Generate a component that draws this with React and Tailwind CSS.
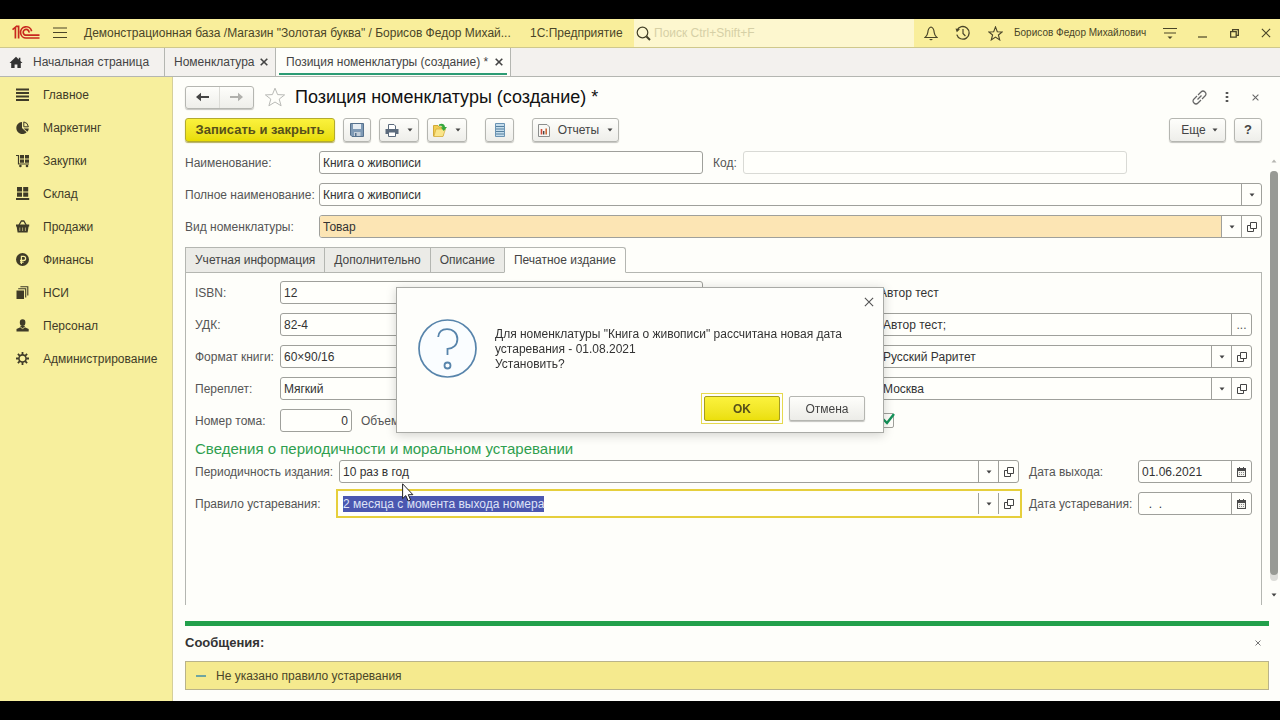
import React, { useEffect, useRef, useState } from 'react';

const Svg = ({ w = 16, h = w, box = `0 0 ${w} ${h}`, className = '', children }) => (
  <svg width={w} height={h} viewBox={box} fill="none" className={`shrink-0 ${className}`} aria-hidden="true">
    {children}
  </svg>
);

const Logo = () => (
  <Svg w={28} h={16}>
    <g stroke="#c8281e" strokeWidth="1.7">
      <path d="M0.5 4.6 L3.4 2.2 V13.6" />
      <path d="M4 1.3 H6.6 V13.6" />
      <path d="M19.6 6.2 A5.6 5.6 0 1 0 14.4 13 H27.5" />
      <path d="M17 7.6 A2.9 2.9 0 1 0 14.4 10.2 H27.5" />
    </g>
  </Svg>
);

const HomeIcon = () => (
  <Svg w={14} h={13}>
    <path d="M7 0.8 L0.5 7 H2.2 V12 H5.6 V8.4 H8.4 V12 H11.8 V7 H13.5 L11.4 5 V1.8 H9.8 V3.5 Z" fill="#333" />
  </Svg>
);

const OpenIcon = () => (
  <Svg w={10} h={10} className="text-[#444]">
    <path d="M3.5 0.5 H9.5 V6.5 H3.5 Z M3.5 3.5 H0.5 V9.5 H6.5 V6.5" stroke="currentColor" />
  </Svg>
);

const CalendarIcon = () => (
  <Svg w={9} h={10}>
    <path d="M0 1 H9 V10 H0 Z M2 0 H3 V1 H2 Z M6 0 H7 V1 H6 Z" fill="#4a4a4a" />
    <path d="M1 4 H8 V9 H1 Z" fill="#f4f4ee" />
    <path d="M2 5.5 H7 M2 7.5 H7" stroke="#888" strokeDasharray="1 1" />
  </Svg>
);

const Caret = () => (
  <Svg w={6} h={4}>
    <path d="M0.5 0.5 H5.5 L3 3.5 Z" fill="#444" />
  </Svg>
);

const Cross = ({ size = 8, width = 1.2 }) => (
  <Svg w={size} box="0 0 8 8">
    <path d="M0.7 0.7 L7.3 7.3 M7.3 0.7 L0.7 7.3" stroke="currentColor" strokeWidth={width} />
  </Svg>
);

const menu = [
  {
    title: 'Главное',
    icon: <path d="M0 1.5 H13 M0 5 H13 M0 8.5 H13 M0 12 H13" stroke="#3f3b28" strokeWidth="1.8" />,
  },
  {
    title: 'Маркетинг',
    icon: (
      <>
        <path d="M6 1 A6 6 0 1 0 10.6 11.2 L6 7 Z" fill="#3f3b28" />
        <path d="M7.8 0.9 A5.6 5.6 0 0 1 12.4 5.8 H7.8 Z" stroke="#3f3b28" />
        <path d="M7.6 7.4 H12.8 A6 6 0 0 1 11.4 10.8 Z" fill="#3f3b28" />
      </>
    ),
  },
  {
    title: 'Закупки',
    icon: (
      <>
        <path d="M0 1.5 H2.5 V10 H13" stroke="#3f3b28" strokeWidth="1.2" />
        <path d="M4 1 H8 V4.4 H4 Z M9 1 H13 V4.4 H9 Z M4 5.4 H8 V8.8 H4 Z M9 5.4 H13 V8.8 H9 Z" fill="#3f3b28" />
        <circle cx="4.4" cy="12" r="1.3" fill="#3f3b28" />
        <circle cx="11" cy="12" r="1.3" fill="#3f3b28" />
      </>
    ),
  },
  {
    title: 'Склад',
    icon: <path d="M1 0 H6 V4.4 H1 Z M7.2 0 H12.2 V4.4 H7.2 Z M1 5.5 H6 V9.8 H1 Z M7.2 5.5 H12.2 V9.8 H7.2 Z M0 11 H13.2 V13 H0 Z" fill="#3f3b28" />,
  },
  {
    title: 'Продажи',
    icon: (
      <>
        <path d="M3 5 L5.4 1 H7.8 L10.2 5" stroke="#3f3b28" strokeWidth="1.3" />
        <path d="M0 4.5 H13.2 V6.5 H12.6 L11.6 12.5 H1.6 L0.6 6.5 H0 Z" fill="#3f3b28" />
        <path d="M3.8 7.5 V11 M6.6 7.5 V11 M9.4 7.5 V11" stroke="#c9c283" strokeWidth="0.8" />
      </>
    ),
  },
  {
    title: 'Финансы',
    icon: (
      <>
        <circle cx="6.5" cy="6.5" r="6.5" fill="#3f3b28" />
        <path d="M5.4 11 V3.4 H7.6 A2 2 0 0 1 7.6 7.4 H4 M4 9.2 H7.6" stroke="#f6ee9c" strokeWidth="1.2" />
      </>
    ),
  },
  {
    title: 'НСИ',
    icon: (
      <>
        <path d="M0.5 4.5 H8 V13 H0.5 Z" fill="#3f3b28" />
        <path d="M2.2 2.7 H9.7 V11.4 M4.4 0.7 H11.8 V9.6" stroke="#3f3b28" strokeWidth="1.1" />
      </>
    ),
  },
  {
    title: 'Персонал',
    icon: (
      <>
        <path d="M3.8 3.4 A2.8 3.2 0 0 1 9.4 3.4 A2.8 3.6 0 0 1 3.8 3.4 Z" fill="#3f3b28" />
        <path d="M0.5 12.5 V10 L4.4 8.2 V7 H8.8 V8.2 L12.7 10 V12.5 Z" fill="#3f3b28" />
        <path d="M4.4 8.2 L6.6 9.6 L8.8 8.2" stroke="#f6ee9c" strokeWidth="0.8" />
      </>
    ),
  },
  {
    title: 'Администрирование',
    icon: (
      <>
        <circle cx="6.5" cy="6.5" r="3.6" stroke="#3f3b28" strokeWidth="1.6" />
        <path
          d="M6.5 0 V2.6 M6.5 10.4 V13 M0 6.5 H2.6 M10.4 6.5 H13 M1.9 1.9 L3.8 3.8 M9.2 9.2 L11.1 11.1 M11.1 1.9 L9.2 3.8 M3.8 9.2 L1.9 11.1"
          stroke="#3f3b28"
          strokeWidth="1.8"
        />
      </>
    ),
  },
];

const formTabs = ['Учетная информация', 'Дополнительно', 'Описание', 'Печатное издание'];

const buttonIcons = {
  list: ['Выбрать из списка', <Caret />],
  open: ['Открыть', <OpenIcon />],
  more: ['Выбрать', '...'],
  date: ['Календарь', <CalendarIcon />],
};

// Поле ввода с кнопками справа
const Field = ({ id, value, buttons = [], boxClass = '', inputClass = '', muted, active, inputRef, label }) => (
  <div
    className={`flex h-[23px] min-w-0 border bg-[#fffffb] ${
      active
        ? 'border-transparent outline-2 outline-offset-1 outline-[#e6cf3c]'
        : `rounded-[3px] ${muted ? 'border-[#d9dad5]' : 'border-[#9fa09b]'}`
    } ${boxClass}`}
  >
    <input
      id={id}
      ref={inputRef}
      aria-label={label}
      defaultValue={value}
      className={`min-w-0 flex-1 rounded-l-[2px] px-[3px] text-[12px] leading-4 text-[#333] outline-none selection:bg-[#4b57b0] selection:text-[#dfe3f7] ${inputClass}`}
    />
    {buttons.map((b) => (
      <button
        key={b}
        type="button"
        aria-label={buttonIcons[b][0]}
        className="flex w-5 shrink-0 items-center justify-center border-l border-[#9fa09b] text-[#555]"
      >
        {buttonIcons[b][1]}
      </button>
    ))}
  </div>
);

const Label = ({ htmlFor, className = '', children }) => (
  <label htmlFor={htmlFor} className={`shrink-0 whitespace-nowrap text-[#555] ${className}`}>
    {children}
  </label>
);

const ToolButton = ({ label, className = '', children }) => (
  <button
    type="button"
    aria-label={label}
    className={`flex h-6 shrink-0 items-center justify-center rounded-[3px] border border-[#b5b6b1] bg-linear-to-b from-[#fefefb] to-[#eeeeea] text-[#444] shadow-[0_1px_1px_#c4c4bf] ${className}`}
  >
    {children}
  </button>
);

const IconButton = ({ label, className = '', children }) => (
  <button type="button" aria-label={label} className={`flex shrink-0 items-center justify-center ${className}`}>
    {children}
  </button>
);

const Header = () => (
  <header className="flex h-[29px] items-center border-b border-[#cfc88c] bg-[#f9ee9b] pr-[6px] pl-3 text-[#4a4528]">
    <Logo />
    <IconButton label="Меню" className="ml-3 w-4">
      <Svg w={14} h={12}>
        <path d="M0 1 H14 M0 5.5 H14 M0 10.5 H14" stroke="#4a4528" strokeWidth="1.2" />
      </Svg>
    </IconButton>
    <div className="ml-4 w-[436px] whitespace-nowrap">
      Демонстрационная база /Магазин "Золотая буква" / Борисов Федор Михай...
    </div>
    <div className="ml-[10px] w-[92px] whitespace-nowrap">1С:Предприятие</div>
    <label className="ml-3 flex h-full min-w-0 flex-1 items-center gap-[3px] bg-[#fdf7cf] pl-[2px]">
      <Svg w={15}>
        <circle cx="6.5" cy="6.5" r="5.3" stroke="#444028" strokeWidth="1.2" />
        <path d="M10.5 10.5 L14 14" stroke="#444028" strokeWidth="2" />
      </Svg>
      <input
        type="search"
        aria-label="Поиск"
        placeholder="Поиск Ctrl+Shift+F"
        className="min-w-0 flex-1 outline-none placeholder:text-[#d6d0a6]"
      />
    </label>
    <IconButton label="Уведомления" className="ml-[9px] w-4">
      <Svg w={14} h={15}>
        <path d="M7 1 C4.4 1.6 4 4 3.8 6.5 C3.6 9 2.4 10 1 11.5 H13 C11.6 10 10.4 9 10.2 6.5 C10 4 9.6 1.6 7 1 Z" stroke="#4a4528" strokeWidth="1.2" />
        <path d="M5 13 H9 L7 14.6 Z" fill="#4a4528" />
      </Svg>
    </IconButton>
    <IconButton label="История" className="ml-4 w-4">
      <Svg w={16}>
        <path d="M2 5.5 A6.3 6.3 0 1 1 1.8 9.6" stroke="#4a4528" strokeWidth="1.3" />
        <path d="M0.5 3.5 L5 4.2 L1.8 7.2 Z" fill="#4a4528" />
        <path d="M8 4 V8.4 L10.4 11" stroke="#4a4528" strokeWidth="1.2" />
      </Svg>
    </IconButton>
    <IconButton label="Избранное" className="ml-4 w-4">
      <Svg w={15}>
        <path d="M7.5 0.9 L9.3 5.7 L14.2 5.9 L10.4 9 L11.7 13.9 L7.5 11.1 L3.3 13.9 L4.6 9 L0.8 5.9 L5.7 5.7 Z" stroke="#4a4528" strokeWidth="1.1" />
      </Svg>
    </IconButton>
    <div className="ml-[11px] w-[137px] text-[10px] whitespace-nowrap">Борисов Федор Михайлович</div>
    <IconButton label="Настройки" className="ml-[11px] w-4">
      <Svg w={14} h={13}>
        <path d="M0 1.5 H14 M1 6 H13" stroke="#4a4528" strokeWidth="1.2" />
        <path d="M4.5 9.5 H9.5 L7 12 Z" fill="#4a4528" />
      </Svg>
    </IconButton>
    <IconButton label="Свернуть" className="ml-4 w-4">
      <Svg w={9} h={10}>
        <path d="M0 9 H9" stroke="#4a4528" strokeWidth="1.2" />
      </Svg>
    </IconButton>
    <IconButton label="Восстановить" className="ml-4 w-4">
      <Svg w={9}>
        <path d="M0.6 2.6 H6.2 V8.2 H0.6 Z M2.6 2.6 V0.6 H8.4 V6.4 H6.2" stroke="#4a4528" strokeWidth="1.3" />
      </Svg>
    </IconButton>
    <IconButton label="Закрыть" className="ml-4 w-4">
      <Cross size={10} width={0.9} />
    </IconButton>
  </header>
);

const OpenTabs = () => (
  <div className="flex h-[29px] border-b border-[#b4b6b1] bg-[#f3f1ee] whitespace-nowrap text-[#444]">
    <a href="#home" className="flex w-[165px] items-center gap-[10px] border-r border-[#b4b6b1] pl-[9px]">
      <HomeIcon />
      Начальная страница
    </a>
    <div className="flex w-[111px] items-center justify-between border-r border-[#b4b6b1] pr-[7px] pl-[9px]">
      <a href="#list">Номенклатура</a>
      <IconButton label="Закрыть вкладку">
        <Cross width={1.6} />
      </IconButton>
    </div>
    <div className="flex w-[235px] border-r border-[#b4b6b1] bg-[#fefefa] px-[3px] pb-px">
      <div className="flex flex-1 items-center justify-between border-b-2 border-[#2c9c74] pt-[3px] pr-1 pl-[7px]">
        <a href="#item">Позиция номенклатуры (создание) *</a>
        <IconButton label="Закрыть вкладку">
          <Cross width={1.6} />
        </IconButton>
      </div>
    </div>
  </div>
);

const Sidebar = () => (
  <nav className="w-[173px] shrink-0 border-r border-[#d5cf9a] bg-[#f7ef9d] pt-px">
    {menu.map((item) => (
      <a key={item.title} href="#" className="flex h-[33px] items-center gap-[13px] pl-4 text-[#3f3b28]">
        <Svg w={14}>{item.icon}</Svg>
        {item.title}
      </a>
    ))}
  </nav>
);

const TitleRow = () => (
  <div className="flex h-[22px] items-center pr-[6px]">
    <div className="flex h-[23px] w-[69px] rounded-[3px] border border-[#b5b6b1] bg-linear-to-b from-[#fefefb] to-[#eeeeea] shadow-[0_1px_1px_#c4c4bf]">
      <IconButton label="Назад" className="flex-1 border-r border-[#dcdcd7]">
        <Svg w={13} h={10}>
          <path d="M0 5 L5 0.8 V9.2 Z M4 4 H13 V6 H4 Z" fill="#444" />
        </Svg>
      </IconButton>
      <IconButton label="Вперед" className="flex-1">
        <Svg w={13} h={10}>
          <path d="M13 5 L8 0.8 V9.2 Z M9 4 H0 V6 H9 Z" fill="#b0b0ac" />
        </Svg>
      </IconButton>
    </div>
    <IconButton label="В избранное" className="ml-[10px]">
      <Svg w={22} h={20}>
        <path d="M11 1.2 L13.6 7.6 L20.6 7.9 L15.2 12.1 L17.1 18.8 L11 15 L4.9 18.8 L6.8 12.1 L1.4 7.9 L8.4 7.6 Z" stroke="#b9bab6" />
      </Svg>
    </IconButton>
    <h1 className="ml-[9px] flex-1 text-[18px] whitespace-nowrap text-[#111]">Позиция номенклатуры (создание) *</h1>
    <IconButton label="Ссылка" className="w-4">
      <Svg w={15}>
        <g stroke="#666" strokeWidth="1.2">
          <path d="M6 5 L9 2 A2.8 2.8 0 0 1 13 6 L10 9" />
          <path d="M9 10 L6 13 A2.8 2.8 0 0 1 2 9 L5 6" />
          <path d="M5.5 9.5 L9.5 5.5" />
        </g>
      </Svg>
    </IconButton>
    <IconButton label="Действия" className="ml-3 w-4">
      <Svg w={4} h={12}>
        <path d="M0.7 1 H3.3 V3 H0.7 Z M0.7 5 H3.3 V7 H0.7 Z M0.7 9 H3.3 V11 H0.7 Z" fill="#555" />
      </Svg>
    </IconButton>
    <IconButton label="Закрыть форму" className="ml-3 w-4 text-[#666]">
      <Cross size={7} />
    </IconButton>
  </div>
);

const Commands = () => (
  <div className="mt-[10px] flex h-6 items-center">
    <button
      type="button"
      className="h-6 w-[150px] rounded-[3px] border border-[#b3ab2e] bg-linear-to-b from-[#fbf23c] to-[#e8dc00] text-[13px] font-bold whitespace-nowrap text-[#56501a] shadow-[0_1px_1px_#b5ae60]"
    >
      Записать и закрыть
    </button>
    <ToolButton label="Записать" className="ml-2 w-7">
      <Svg w={14}>
        <path d="M0.5 0.5 H13.5 V13.5 H2 L0.5 12 Z" fill="#7f9ab5" stroke="#56718d" />
        <path d="M3 1 H11 V6 H3 Z" fill="#e6edf3" />
        <path d="M4 9 H10.5 V13 H4 Z" fill="#c3ced9" />
        <path d="M5 10 H6.5 V13 H5 Z" fill="#56718d" />
      </Svg>
    </ToolButton>
    <ToolButton label="Печать" className="ml-2 w-10 gap-2">
      <Svg w={14} h={13}>
        <path d="M3.5 5 V0.5 H9 L10.5 2 V5" fill="#fff" stroke="#5b6a7c" />
        <path d="M0.5 5 H13.5 V10 H0.5 Z" fill="#5b6a7c" />
        <path d="M3.5 8 H10.5 V12.5 H3.5 Z" fill="#fff" stroke="#5b6a7c" />
      </Svg>
      <Caret />
    </ToolButton>
    <ToolButton label="Создать на основании" className="ml-2 w-10 gap-2">
      <Svg w={14}>
        <path d="M0.5 2.5 H5 L6 4 H10 V13 H0.5 Z" fill="#f2cf52" stroke="#d2a93a" />
        <path d="M3 6 H12.5 L10 13.5 H0.8 Z" fill="#fae58a" stroke="#d2a93a" strokeWidth="0.7" />
        <path d="M6 1.5 C9 0 11.6 1.2 12 4 H14 L10.8 8 L7.8 4.6 H9.6 C9.3 3 8 2.6 6 3 Z" fill="#35a83e" />
      </Svg>
      <Caret />
    </ToolButton>
    <ToolButton label="Список" className="ml-[18px] w-[29px]">
      <Svg w={10} h={14}>
        <path d="M0.5 0.5 H9.5 V13.5 H0.5 Z" fill="#c4dcec" stroke="#6a93b3" />
        <path d="M1 3.5 H9 M1 6 H9 M1 8.5 H9 M1 11 H9" stroke="#55809f" />
      </Svg>
    </ToolButton>
    <ToolButton className="ml-[18px] w-[87px] gap-2">
      <Svg w={12} h={13}>
        <path d="M0.5 0.5 H9 L11.5 3 V12.5 H0.5 Z" fill="#f8f8f5" stroke="#8b8d8c" />
        <path d="M3.5 5 V10.5" stroke="#cf4a3a" strokeWidth="1.6" />
        <path d="M5.7 7 V10.5" stroke="#444" strokeWidth="1.4" />
        <path d="M8.2 4.5 V10.5" stroke="#cf6a3a" strokeWidth="1.6" />
      </Svg>
      Отчеты
      <Caret />
    </ToolButton>
    <ToolButton className="ml-auto w-[57px] gap-[6px] pl-1">
      Еще
      <Caret />
    </ToolButton>
    <ToolButton className="mr-[7px] ml-2 w-7 text-[13px] font-bold">?</ToolButton>
  </div>
);

const PrintEdition = ({ ruleRef }) => (
  <div className="flex-1 border border-b-0 border-[#b4b6b1] px-[9px] pt-2">
    <div className="grid grid-cols-[508px_1fr] gap-x-[10px] gap-y-[9px]">
      <div className="flex items-center">
        <Label htmlFor="isbn" className="w-[85px]">ISBN:</Label>
        <Field id="isbn" value="12" boxClass="flex-1" />
      </div>
      <div className="flex items-center pl-[166px] text-[#333]">Автор тест</div>

      <div className="flex items-center">
        <Label htmlFor="udk" className="w-[85px]">УДК:</Label>
        <Field id="udk" value="82-4" boxClass="flex-1" />
      </div>
      <div className="flex items-center pl-[166px]">
        <Field id="authors" label="Авторы" value="Автор тест;" buttons={['more']} boxClass="flex-1" />
      </div>

      <div className="flex items-center">
        <Label htmlFor="format" className="w-[85px]">Формат книги:</Label>
        <Field id="format" value="60×90/16" boxClass="flex-1" />
      </div>
      <div className="flex items-center pl-[166px]">
        <Field id="publisher" label="Издательство" value="Русский Раритет" buttons={['list', 'open']} boxClass="flex-1" />
      </div>

      <div className="flex items-center">
        <Label htmlFor="cover" className="w-[85px]">Переплет:</Label>
        <Field id="cover" value="Мягкий" boxClass="flex-1" />
      </div>
      <div className="flex items-center pl-[166px]">
        <Field id="city" label="Место издания" value="Москва" buttons={['list', 'open']} boxClass="flex-1" />
      </div>

      <div className="flex items-center">
        <Label htmlFor="volume" className="w-[85px]">Номер тома:</Label>
        <Field id="volume" value="0" boxClass="w-[72px]" inputClass="text-right" />
        <Label htmlFor="pages" className="mr-2 ml-[9px]">Объем:</Label>
        <Field id="pages" value="" boxClass="w-[72px]" inputClass="text-right" />
      </div>
      <div className="flex items-center pl-[166px]">
        <span className="relative flex">
          <input
            type="checkbox"
            aria-label="Периодическое издание"
            defaultChecked
            className="peer size-[15px] appearance-none rounded-[2px] border border-[#9fa09b] bg-[#fffffb]"
          />
          <Svg w={13} h={12} className="pointer-events-none absolute bottom-[3px] left-[3px] hidden peer-checked:block">
            <path d="M1 6 L5 10 L12 1" stroke="#14935a" strokeWidth="2.4" />
          </Svg>
        </span>
      </div>
    </div>

    <h2 className="mt-[7px] mb-px text-[15px] leading-5 text-[#2f9e4f]">
      Сведения о периодичности и моральном устаревании
    </h2>

    <div className="grid grid-cols-[1fr_223px] gap-x-[10px] gap-y-[9px]">
      <div className="flex items-center">
        <Label htmlFor="period" className="w-[144px]">Периодичность издания:</Label>
        <Field id="period" value="10 раз в год" buttons={['list', 'open']} boxClass="flex-1" />
      </div>
      <div className="flex items-center">
        <Label htmlFor="issued" className="w-[109px]">Дата выхода:</Label>
        <Field id="issued" value="01.06.2021" buttons={['date']} boxClass="flex-1" />
      </div>
      <div className="flex items-center">
        <Label htmlFor="rule" className="w-[144px]">Правило устаревания:</Label>
        <Field
          id="rule"
          inputRef={ruleRef}
          value="2 месяца с момента выхода номера"
          buttons={['list', 'open']}
          boxClass="flex-1"
          active
        />
      </div>
      <div className="flex items-center">
        <Label htmlFor="expires" className="w-[109px]">Дата устаревания:</Label>
        <Field id="expires" value="  .  ." buttons={['date']} boxClass="flex-1" />
      </div>
    </div>
  </div>
);

const Scrollbar = () => (
  <div className="flex w-[9px] shrink-0 flex-col items-center pt-2 pb-2">
    <Svg w={6} h={4}>
      <path d="M0.5 3.5 H5.5 L3 0.5 Z" fill="#b5b5b1" />
    </Svg>
    <div className="mt-2 flex w-2 flex-1 flex-col rounded bg-[#dcdcd8] pb-[6px]">
      <div className="flex-1 rounded bg-[#989a94]" />
    </div>
    <Svg w={6} h={4} className="mt-3">
      <path d="M0.5 0.5 H5.5 L3 3.5 Z" fill="#444" />
    </Svg>
  </div>
);

const Messages = () => (
  <section className="mt-4 mr-[11px] border-t-5 border-[#22a04b]">
    <div className="flex h-[35px] items-center justify-between pr-2 pb-[2px]">
      <h2 className="text-[13px] font-bold text-[#333]">Сообщения:</h2>
      <IconButton label="Закрыть сообщения" className="text-[#666]">
        <Cross size={6} />
      </IconButton>
    </div>
    <div className="flex h-[29px] items-center gap-[10px] border border-[#b9b38a] bg-[#f5ea8e] pl-[10px] text-[#4a4528]">
      <span className="h-[2px] w-[10px] bg-[#6fa5a0]" />
      Не указано правило устаревания
    </div>
  </section>
);

const Question = ({ onClose }) => (
  <div className="fixed inset-0 flex items-center justify-center">
    <div
      role="dialog"
      aria-label="Вопрос"
      className="relative w-[488px] border border-[#a9aaa6] bg-[#fefefb] pt-[31px] pr-[18px] pb-2 pl-[21px] shadow-[0_2px_10px_rgba(0,0,0,0.18)]"
    >
      <button type="button" aria-label="Закрыть" onClick={onClose} className="absolute top-[9px] right-[9px] text-[#555]">
        <Cross size={10} width={0.9} />
      </button>
      <div className="flex gap-[18px]">
        <Svg w={59} h={59}>
          <circle cx="29.5" cy="29.5" r="28.5" fill="#fafdff" stroke="#5784ab" strokeWidth="1.7" />
          <path d="M20.2 18 C20.8 12 24.5 10.2 29 10.2 C35 10.2 39.4 14.2 39.4 20 C39.4 26 35.2 29.8 29.5 29.8 V36" stroke="#5784ab" strokeWidth="1.8" />
          <circle cx="29.5" cy="46.5" r="3" stroke="#5784ab" strokeWidth="1.8" />
        </Svg>
        <p className="pt-2 leading-[15px] text-[#333]">
          Для номенклатуры "Книга о живописи" рассчитана новая дата
          <br />
          устаревания - 01.08.2021
          <br />
          Установить?
        </p>
      </div>
      <div className="mt-[15px] flex items-center justify-end gap-[6px]">
        <div className="border border-[#e6d94e] p-[2px]">
          <button
            type="button"
            onClick={onClose}
            className="block h-[25px] w-[76px] rounded-[2px] border border-[#a49c22] bg-linear-to-b from-[#fbf23c] to-[#ebdf0a] font-bold text-[#56501a]"
          >
            OK
          </button>
        </div>
        <button
          type="button"
          onClick={onClose}
          className="h-[25px] w-[76px] rounded-[2px] border border-[#b5b6b1] bg-linear-to-b from-[#fefefb] to-[#ececE8] text-[#444] shadow-[0_1px_1px_#c4c4bf]"
        >
          Отмена
        </button>
      </div>
    </div>
  </div>
);

const Pointer = () => (
  <div className="pointer-events-none fixed top-[483px] left-[402px]">
    <Svg w={12} h={19}>
      <path d="M0.6 0.8 V15.6 L3.8 12.6 L6.2 18 L8.6 17 L6.3 11.7 H10.9 Z" fill="#fff" stroke="#222" />
    </Svg>
  </div>
);

const App = () => {
  const [asking, setAsking] = useState(true);
  const [tab, setTab] = useState('Печатное издание');
  const ruleRef = useRef(null);

  useEffect(() => {
    ruleRef.current?.focus();
    ruleRef.current?.select();
  }, []);

  return (
    <div className="flex min-h-screen flex-col bg-black py-[19px] font-['Liberation_Sans',Arial,sans-serif] text-[12px] leading-4">
      <Header />
      <OpenTabs />
      <div className="flex flex-1 bg-[#fefefa]">
        <Sidebar />
        <main className="flex min-w-0 flex-1 flex-col pt-[9px] pb-[11px] pl-3">
          <div className="mr-[11px]">
            <TitleRow />
            <Commands />
          </div>
          <div className="mt-[9px] flex flex-1 gap-[7px] pr-[2px]">
            <div className="flex min-w-0 flex-1 flex-col gap-[9px]">
              <div className="flex items-center">
                <Label htmlFor="name" className="w-[134px]">Наименование:</Label>
                <Field id="name" value="Книга о живописи" boxClass="w-[384px]" />
                <Label htmlFor="code" className="ml-[10px] w-[30px]">Код:</Label>
                <Field id="code" value="" boxClass="w-[384px]" muted />
              </div>
              <div className="flex items-center">
                <Label htmlFor="fullName" className="w-[134px]">Полное наименование:</Label>
                <Field id="fullName" value="Книга о живописи" buttons={['list']} boxClass="flex-1" />
              </div>
              <div className="flex items-center">
                <Label htmlFor="kind" className="w-[134px]">Вид номенклатуры:</Label>
                <Field id="kind" value="Товар" buttons={['list', 'open']} boxClass="flex-1" inputClass="bg-[#fce5b4]" />
              </div>
              <div className="flex flex-1 flex-col">
                <div role="tablist" className="-mb-px flex">
                  {formTabs.map((t) => (
                    <button
                      key={t}
                      type="button"
                      role="tab"
                      aria-selected={t === tab}
                      onClick={() => setTab(t)}
                      className={`-mr-px h-[26px] border border-[#b4b6b1] px-[9px] whitespace-nowrap text-[#444] ${
                        t === tab ? 'relative rounded-tr-[3px] border-b-[#fefefa] bg-[#fefefa]' : 'bg-[#ebebe7]'
                      }`}
                    >
                      {t}
                    </button>
                  ))}
                </div>
                <PrintEdition ruleRef={ruleRef} />
              </div>
            </div>
            <Scrollbar />
          </div>
          <Messages />
        </main>
      </div>
      {asking && <Question onClose={() => setAsking(false)} />}
      <Pointer />
    </div>
  );
};

export default App;
